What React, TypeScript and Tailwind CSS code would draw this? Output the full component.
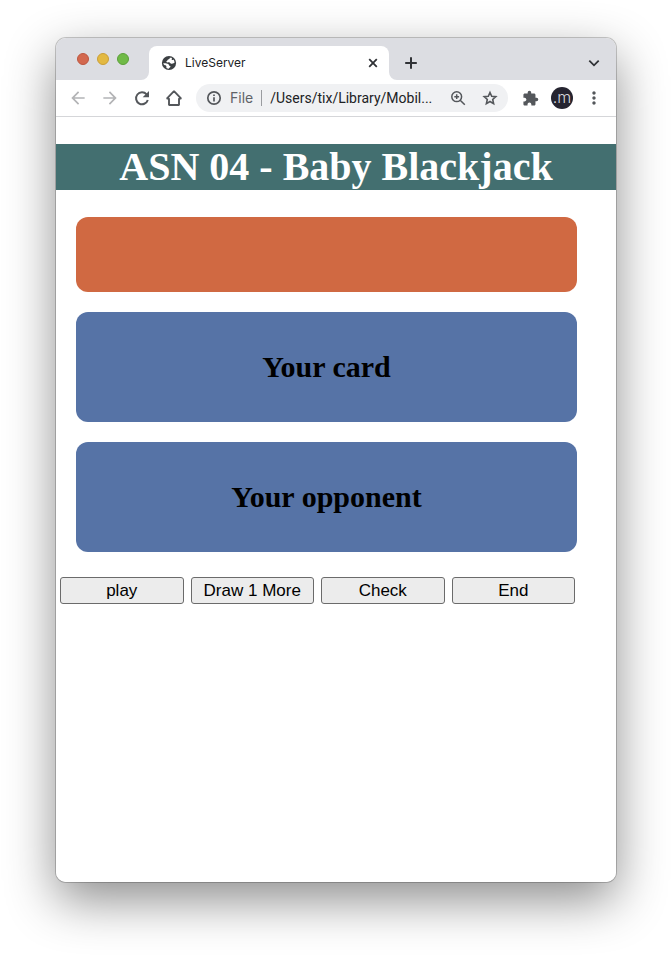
import type { ReactNode } from "react";
import { MdArrowBack, MdArrowForward, MdExtension, MdMoreVert } from "react-icons/md";

function IconButton({ label, children }: { label: string; children: ReactNode }) {
  return (
    <button
      type="button"
      aria-label={label}
      className="flex size-5 shrink-0 items-center justify-center"
    >
      {children}
    </button>
  );
}

function TabStrip() {
  return (
    <div className="flex h-[42px] items-end bg-[#dcdde2] pr-3">
      <div className="flex h-full items-center gap-2 pl-[21px]">
        <button type="button" aria-label="Close window" className="size-3 rounded-full border border-[#bd5640] bg-[#d3684f]" />
        <button type="button" aria-label="Minimize window" className="size-3 rounded-full border border-[#cb9f37] bg-[#e3b942]" />
        <button type="button" aria-label="Zoom window" className="size-3 rounded-full border border-[#5ca03a] bg-[#70ba47]" />
      </div>
      <svg viewBox="0 0 8 8" className="ml-3 size-2 shrink-0" aria-hidden="true">
        <path d="M8 0v8H0a8 8 0 0 0 8-8z" fill="#fff" />
      </svg>
      <div className="flex h-[34px] w-60 min-w-0 items-center rounded-t-lg bg-white pl-3 pr-2">
        <svg viewBox="0 0 16 16" className="size-4 shrink-0" aria-hidden="true">
          <circle cx="8" cy="8" r="7.100" fill="#3c4043" />
          <path
            d="M8.800 2.700c-.1 1.300-.7 1.500-1.700 1.700-.6.1-.5 1-1 1.300-.6.300-.9.600-.6 1.300.3.600 1.600.3 2.500.3 1.200 0 1.300 1.400 2.300 1.500 1.100.1 1.300-.8 3.200-.8A5.800 5.800 0 0 0 12.600 4.400c-.6.900-1.700.9-1.900.1-.2-.7.3-.9.300-1.500-.6-.3-1.400-.4-2.200-.3z"
            fill="#fff"
          />
          <path
            d="M2.300 8.200c1.700-.1 3.700-.1 4.900.7 1 .7.600 1.800 1.500 1.900.8.100.9.600.6 1.300-.3.700-1.300.6-1.500 1.700A5.800 5.800 0 0 1 5.400 13v-1.600c0-.8-.8-.8-1.500-1.100-.7-.3-1.500-1-1.600-2.100z"
            fill="#fff"
          />
        </svg>
        <span className="ml-2 flex-1 truncate text-xs text-[#202124]">LiveServer</span>
        <button type="button" aria-label="Close tab" className="flex size-4 items-center justify-center">
          <svg viewBox="0 0 16 16" className="size-4" fill="none" stroke="#303236" strokeWidth="1.800">
            <path d="M4.200 4.200l7.600 7.600M11.800 4.200l-7.600 7.600" />
          </svg>
        </button>
      </div>
      <svg viewBox="0 0 8 8" className="size-2 shrink-0" aria-hidden="true">
        <path d="M0 0v8h8a8 8 0 0 1-8-8z" fill="#fff" />
      </svg>
      <div className="flex h-[34px] flex-1 items-center justify-between pl-1">
        <IconButton label="New tab">
          <svg viewBox="0 0 20 20" className="size-5" fill="none" stroke="#303236" strokeWidth="2">
            <path d="M10 4.200v11.600M4.200 10h11.600" />
          </svg>
        </IconButton>
        <IconButton label="Search tabs">
          <svg viewBox="0 0 20 20" className="size-5" fill="none" stroke="#303236" strokeWidth="1.800">
            <path d="M5.300 7.600L10 12.300l4.700-4.700" />
          </svg>
        </IconButton>
      </div>
    </div>
  );
}

function Toolbar() {
  return (
    <div className="flex h-[37px] items-center gap-3 border-b border-[#d5d6d9] bg-white px-3 text-[#54575b]">
      <IconButton label="Back">
        <MdArrowBack className="size-5 text-[#b3b4b6]" />
      </IconButton>
      <IconButton label="Forward">
        <MdArrowForward className="size-5 text-[#b3b4b6]" />
      </IconButton>
      <IconButton label="Reload">
        <svg viewBox="0 0 20 20" className="size-5">
          <path
            d="M14.600 6.300A6 6 0 1 0 15.800 12"
            fill="none"
            stroke="currentColor"
            strokeWidth="2"
          />
          <path d="M17 3v6.300h-6.300z" fill="currentColor" />
        </svg>
      </IconButton>
      <IconButton label="Home">
        <svg
          viewBox="0 0 20 20"
          className="size-5"
          fill="none"
          stroke="currentColor"
          strokeWidth="1.900"
          strokeLinejoin="bevel"
        >
          <path d="M2.800 10.600H5V17h10v-6.400h2.200L10 3.200z" />
        </svg>
      </IconButton>
      <div className="flex h-7 min-w-0 flex-1 items-center rounded-full bg-[#f0f1f3] px-2">
        <IconButton label="Page information">
          <svg viewBox="0 0 20 20" className="size-5" fill="none" stroke="currentColor" strokeWidth="1.700">
            <circle cx="10" cy="10" r="6.200" />
            <path d="M10 9.200v4.200M10 6.400v1.700" />
          </svg>
        </IconButton>
        <label htmlFor="address" className="ml-1.5 text-sm text-[#5f6368]">
          File
        </label>
        <span className="ml-2 h-4 w-px bg-[#9a9ca0]" />
        <input
          id="address"
          type="text"
          defaultValue="/Users/tix/Library/Mobil..."
          className="ml-2 w-0 min-w-0 flex-1 bg-transparent font-[Roboto,sans-serif] text-sm text-[#202124] outline-none"
        />
        <div className="ml-1 flex gap-3">
          <IconButton label="Zoom level">
            <svg viewBox="0 0 20 20" className="size-5" fill="none" stroke="currentColor" strokeWidth="1.500">
              <circle cx="8.700" cy="8.700" r="4.900" />
              <path d="M12.200 12.200l4.600 4.600M8.700 6.300v4.800M6.300 8.700h4.800" />
            </svg>
          </IconButton>
          <IconButton label="Bookmark this tab">
            <svg viewBox="0 0 20 20" className="size-5" fill="none" stroke="currentColor" strokeWidth="1.600">
              <path d="M10 4.500l1.700 3.800 4.100.4-3.100 2.800.9 4.100L10 13.500l-3.600 2.100.9-4.100-3.100-2.800 4.100-.4z" />
            </svg>
          </IconButton>
        </div>
      </div>
      <IconButton label="Extensions">
        <MdExtension className="size-[17px]" />
      </IconButton>
      <button
        type="button"
        aria-label="Profile"
        className="-mx-px flex size-[22px] shrink-0 items-center justify-center rounded-full bg-[#252430] text-base leading-none font-light text-[#d9d9dd]"
      >
        <span className="pb-0.5">.m</span>
      </button>
      <IconButton label="Menu">
        <MdMoreVert className="size-5" />
      </IconButton>
    </div>
  );
}

function Panel({ title }: { title: string }) {
  return (
    <section className="flex h-[110px] items-center justify-center rounded-xl bg-[#5673a6]">
      <h2 className="text-[30px] leading-9 font-bold text-black">{title}</h2>
    </section>
  );
}

const actions = ["play", "Draw 1 More", "Check", "End"];

function Game() {
  return (
    <main className="flex-1 bg-white pt-[27px] font-['Liberation_Serif',serif]">
      <h1 className="bg-[#436f70] text-center text-[40px] leading-[46px] font-bold text-white">
        ASN 04 - Baby Blackjack
      </h1>
      <div className="mt-[27px] mr-[39px] ml-5 flex flex-col gap-5">
        <div className="h-[75px] rounded-xl bg-[#d06942]" />
        <Panel title="Your card" />
        <Panel title="Your opponent" />
      </div>
      <div className="mt-[25px] mr-[41px] ml-1 grid grid-cols-4 gap-[7px]">
        {actions.map((action) => (
          <button
            key={action}
            type="button"
            className="h-[27px] rounded-[3px] border border-[#6b6b6b] bg-[#ececec] font-['Liberation_Sans',sans-serif] text-[17px] leading-6 whitespace-nowrap text-black"
          >
            {action}
          </button>
        ))}
      </div>
    </main>
  );
}

export default function App() {
  return (
    <div className="flex min-h-screen flex-col bg-white px-14 pt-[38px] pb-[74px] font-[Inter,sans-serif]">
      <div className="flex flex-1 flex-col overflow-hidden rounded-[10px] shadow-[0_0_0_1px_rgba(0,0,0,0.2),0_18px_50px_rgba(0,0,0,0.45)]">
        <TabStrip />
        <Toolbar />
        <Game />
      </div>
    </div>
  );
}
